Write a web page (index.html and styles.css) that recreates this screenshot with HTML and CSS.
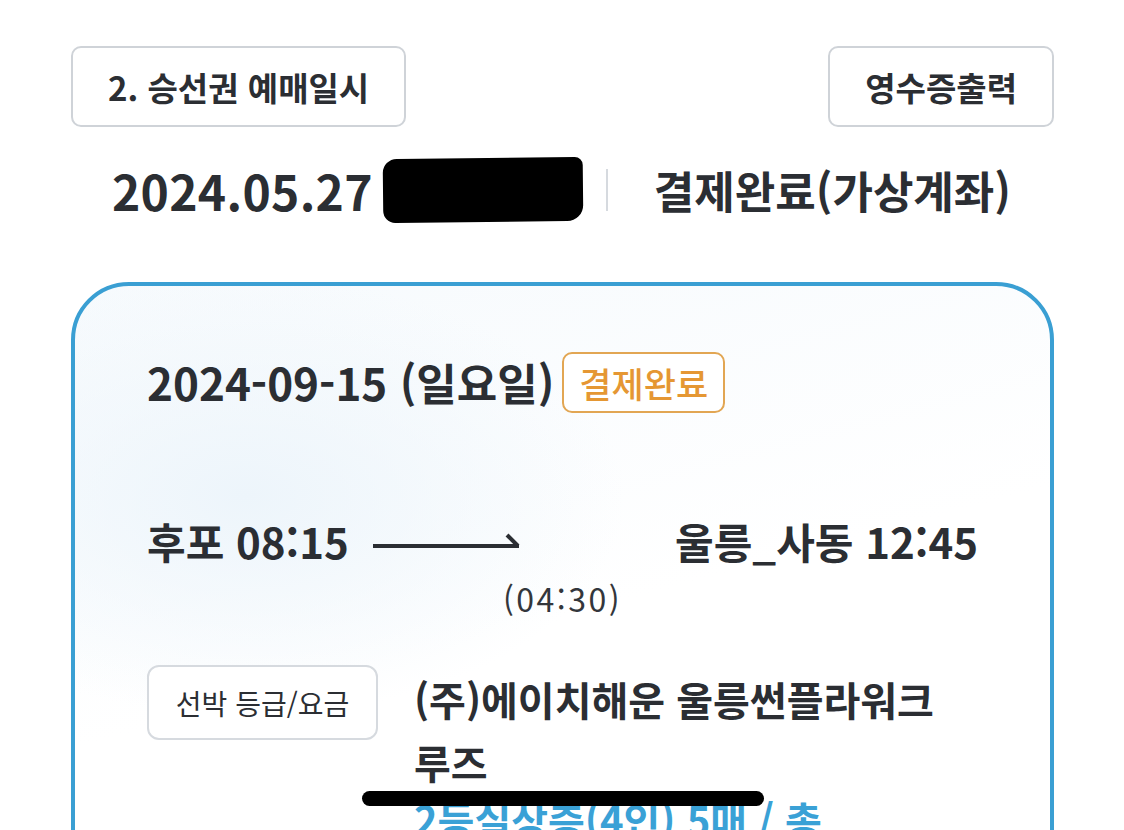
FILE: index.html
```html
<!DOCTYPE html>
<html lang="ko">
<head>
    <meta charset="UTF-8">
    <meta name="viewport" content="width=device-width, initial-scale=1.0">
    <title>승선권 예매내역</title>
    <link rel="stylesheet" href="styles.css">
</head>
<body>
    <div class="page">
        <div class="top-row">
            <div class="outline-btn">2. 승선권 예매일시</div>
            <div class="outline-btn">영수증출력</div>
        </div>

        <div class="summary">
            <span class="summary-date">2024.05.27</span>
            <span class="redacted"></span>
            <span class="divider"></span>
            <span class="summary-status">결제완료(가상계좌)</span>
        </div>

        <div class="ticket-card">
            <div class="sail-date">
                <span>2024-09-15 (일요일)</span>
                <span class="status-badge">결제완료</span>
            </div>

            <div class="route">
                <div class="route-left">
                    <span class="port">후포 08:15</span>
                    <svg class="arrow" width="148" height="20" viewBox="0 0 148 20">
                        <line x1="0" y1="15" x2="146" y2="15" stroke="#2b2e33" stroke-width="4"/>
                        <line x1="134" y1="4" x2="145" y2="15" stroke="#2b2e33" stroke-width="4"/>
                    </svg>
                </div>
                <span class="port">울릉_사동 12:45</span>
            </div>
            <div class="duration">(04:30)</div>

            <div class="ship-row">
                <div class="grade-btn">선박 등급/요금</div>
                <div class="ship-info">
                    <div class="ship-name">(주)에이치해운 울릉썬플라워크루즈</div>
                    <div class="seat-info">2등실상층(4인) 5매 / 총</div>
                </div>
            </div>
        </div>
    </div>
    <div class="home-bar"></div>
</body>
</html>
```

FILE: styles.css
```css
/* Global */
body {
    margin: 0;
    background-color: #fff;
    font-family: 'Noto Sans CJK KR', 'Noto Sans', sans-serif;
    color: #2b2e33;
    overflow: hidden;
    height: 830px;
}

.page {
    padding: 46px 70px 0 71px;
}

/* Top buttons */
.top-row {
    display: flex;
    justify-content: space-between;
}

.outline-btn {
    height: 77px;
    padding: 0 35px;
    display: flex;
    align-items: center;
    border: 2px solid #cfd3d8;
    border-radius: 10px;
    font-size: 33px;
    font-weight: 700;
}

/* Booking summary */
.summary {
    display: flex;
    align-items: center;
    height: 66px;
    margin-top: 30px;
    padding-left: 41px;
}

.summary-date {
    font-size: 48px;
    font-weight: 700;
    letter-spacing: 0.3px;
}

.redacted {
    width: 200px;
    height: 64px;
    margin-left: 10px;
    background-color: #000;
    border-radius: 14px 8px 16px 12px;
    transform: rotate(-0.6deg);
}

.divider {
    width: 2px;
    height: 42px;
    margin: 0 46px 0 23px;
    background-color: #d6dadf;
}

.summary-status {
    font-size: 44px;
    font-weight: 700;
}

/* Ticket card */
.ticket-card {
    margin-top: 59px;
    height: 600px;
    border: 4px solid #3a9fd3;
    border-radius: 58px;
    padding: 64px 72px 0 72px;
    background:
        radial-gradient(ellipse 380px 220px at 170px 210px, #edf5fb, rgba(237, 245, 251, 0) 100%),
        linear-gradient(165deg, #f6fafd 0%, #ffffff 50%);
}

.sail-date {
    display: flex;
    align-items: center;
    gap: 8px;
    font-size: 44px;
    font-weight: 700;
}

.status-badge {
    height: 61px;
    padding: 0 15px;
    display: flex;
    align-items: center;
    box-sizing: border-box;
    border: 2px solid #e2a653;
    border-radius: 10px;
    background-color: #fff;
    color: #e59733;
    font-size: 35px;
    font-weight: 500;
}

.route {
    display: flex;
    justify-content: space-between;
    align-items: center;
    margin-top: 96px;
}

.route-left {
    display: flex;
    align-items: center;
}

.port {
    font-size: 42px;
    font-weight: 700;
}

.arrow {
    margin-left: 24px;
}

.duration {
    margin-top: 4px;
    padding-left: 356px;
    font-size: 32px;
    letter-spacing: 2.5px;
    color: #33363b;
}

/* Ship details */
.ship-row {
    display: flex;
    align-items: flex-start;
    gap: 36px;
    margin-top: 44px;
}

.grade-btn {
    width: 227px;
    height: 71px;
    flex-shrink: 0;
    display: flex;
    align-items: center;
    justify-content: center;
    border: 2px solid #d6dadf;
    border-radius: 12px;
    background-color: #fff;
    font-size: 28px;
}

.ship-info {
    width: 545px;
    font-size: 40px;
    font-weight: 700;
    line-height: 63px;
    margin-top: 3px;
}

.seat-info {
    color: #3aa1d6;
    margin-top: -6px;
}

/* Phone home indicator */
.home-bar {
    position: absolute;
    left: 362px;
    top: 791px;
    width: 402px;
    height: 15px;
    border-radius: 8px;
    background-color: #000;
}
```
